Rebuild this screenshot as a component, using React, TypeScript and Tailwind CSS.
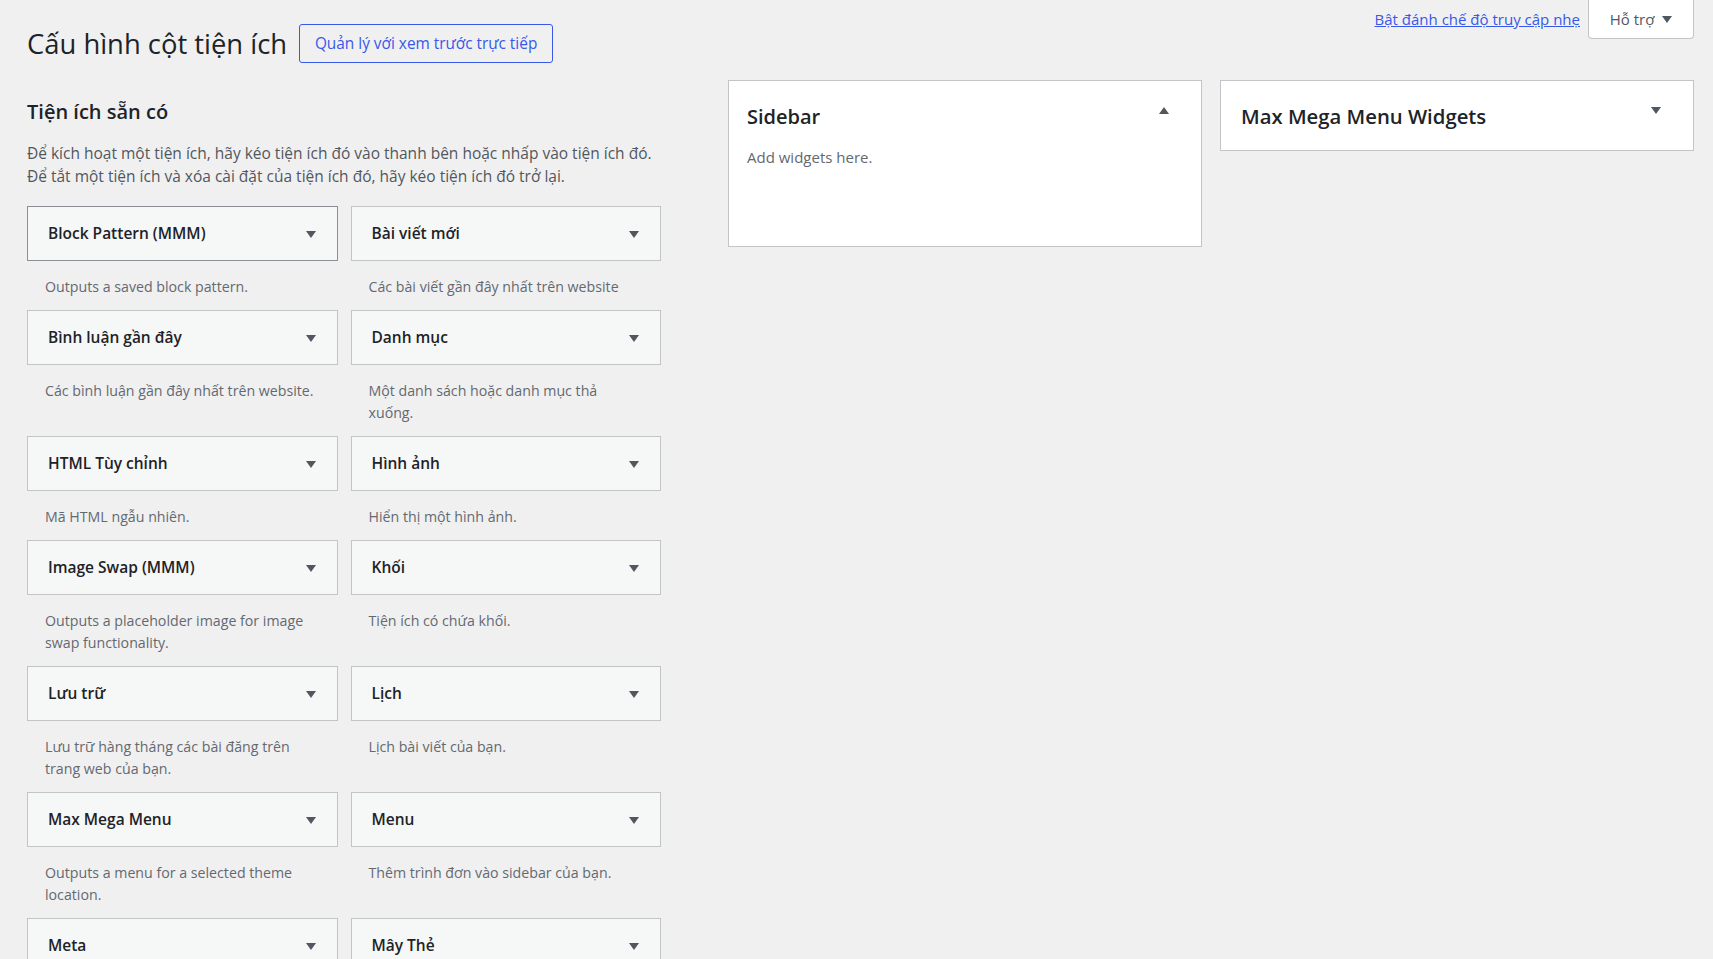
import React from "react";

type W = { title: string; desc: string };

const widgets: W[] = [
  { title: "Block Pattern (MMM)", desc: "Outputs a saved block pattern." },
  { title: "Bài viết mới", desc: "Các bài viết gần đây nhất trên website" },
  { title: "Bình luận gần đây", desc: "Các bình luận gần đây nhất trên website." },
  { title: "Danh mục", desc: "Một danh sách hoặc danh mục thả xuống." },
  { title: "HTML Tùy chỉnh", desc: "Mã HTML ngẫu nhiên." },
  { title: "Hình ảnh", desc: "Hiển thị một hình ảnh." },
  { title: "Image Swap (MMM)", desc: "Outputs a placeholder image for image swap functionality." },
  { title: "Khối", desc: "Tiện ích có chứa khối." },
  { title: "Lưu trữ", desc: "Lưu trữ hàng tháng các bài đăng trên trang web của bạn." },
  { title: "Lịch", desc: "Lịch bài viết của bạn." },
  { title: "Max Mega Menu", desc: "Outputs a menu for a selected theme location." },
  { title: "Menu", desc: "Thêm trình đơn vào sidebar của bạn." },
  { title: "Meta", desc: "Đăng nhập, RSS, & liên kết WordPress.org." },
  { title: "Mây Thẻ", desc: "Một đám mây các thẻ được dùng nhiều nhất." },
];

function Down({ className = "" }: { className?: string }) {
  return (
    <svg width="10" height="7" viewBox="0 0 10 7" className={className}>
      <path d="M0 0 L10 0 L5 7 Z" fill="#50575e" />
    </svg>
  );
}

function Up({ className = "" }: { className?: string }) {
  return (
    <svg width="10" height="7" viewBox="0 0 10 7" className={className}>
      <path d="M0 7 L10 7 L5 0 Z" fill="#50575e" />
    </svg>
  );
}

export default function App() {
  return (
    <div
      className="h-screen overflow-hidden bg-[#f0f0f1] text-[#1d2327]"
      style={{ fontFamily: "'Open Sans', 'Noto Sans', sans-serif" }}
    >
      <div className="flex items-start justify-between">
        <div className="flex items-center pl-[27px] pt-[24px]">
          <h1 className="text-[27.4px] leading-[39px] font-normal text-[#1d2327]">Cấu hình cột tiện ích</h1>
          <button className="ml-[12px] h-[39px] w-[254px] rounded-[3px] border border-[#3858e9] text-[15.4px] text-[#3858e9] bg-transparent">
            Quản lý với xem trước trực tiếp
          </button>
        </div>
        <div className="flex items-start pr-[19px]">
          <a className="mt-[8px] mr-[8px] text-[15px] leading-[22px] text-[#3858e9] underline">
            Bật đánh chế độ truy cập nhẹ
          </a>
          <div className="flex h-[39px] w-[106px] items-center justify-center gap-[8px] rounded-b-[4px] border border-t-0 border-[#c3c4c7] bg-white text-[15px] text-[#50575e]">
            <span>Hỗ trợ</span>
            <Down />
          </div>
        </div>
      </div>

      <div className="flex items-start pl-[27px] pt-[17px]">
        <div className="w-[634px] shrink-0">
          <h2 className="mt-[18px] text-[20px] font-semibold leading-[28px] text-[#1d2327]">Tiện ích sẵn có</h2>
          <p className="mt-[16px] text-[15.5px] leading-[23px] text-[#50575e]">
            Để kích hoạt một tiện ích, hãy kéo tiện ích đó vào thanh bên hoặc nhấp vào tiện ích đó.
            <br />
            Để tắt một tiện ích và xóa cài đặt của tiện ích đó, hãy kéo tiện ích đó trở lại.
          </p>
          <div className="mt-[18px] grid grid-cols-2 gap-x-[13px]">
            {widgets.map((w, i) => (
              <div key={i}>
                <div
                  className={`flex h-[55px] items-center justify-between border bg-[#f6f7f7] pl-[20px] pr-[21px] ${
                    i === 0 ? "border-[#8c8f94]" : "border-[#c3c4c7]"
                  }`}
                >
                  <span className="text-[15.5px] font-semibold text-[#1d2327]">{w.title}</span>
                  <Down className="mt-[1px]" />
                </div>
                <p className="pl-[18px] pr-[18px] pt-[15px] pb-[12px] text-[14.2px] leading-[22px] text-[#646970]">
                  {w.desc}
                </p>
              </div>
            ))}
          </div>
        </div>

        <div className="ml-[67px] flex items-start gap-[18px]">
          <div className="h-[167px] w-[474px] border border-[#c3c4c7] bg-white">
            <div className="flex items-center justify-between pl-[18px] pr-[32px] pt-[22px]">
              <h2 className="text-[20px] font-semibold leading-[28px] text-[#1d2327]">Sidebar</h2>
              <Up className="-mt-[14px]" />
            </div>
            <p className="pl-[18px] pt-[15px] text-[15px] leading-[22px] text-[#646970]">Add widgets here.</p>
          </div>
          <div className="h-[71px] w-[474px] border border-[#c3c4c7] bg-white">
            <div className="flex items-center justify-between pl-[20px] pr-[32px] pt-[21px]">
              <h2 className="text-[20.3px] font-semibold leading-[28px] text-[#1d2327]">Max Mega Menu Widgets</h2>
              <Down className="-mt-[12px]" />
            </div>
          </div>
        </div>
      </div>
    </div>
  );
}
